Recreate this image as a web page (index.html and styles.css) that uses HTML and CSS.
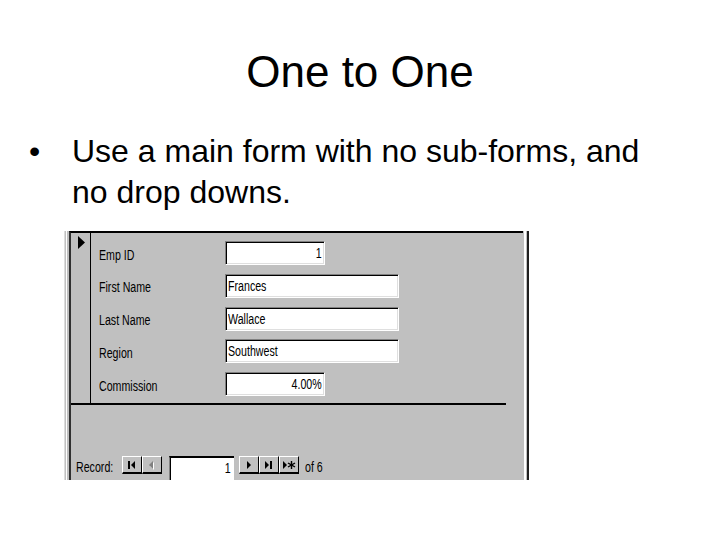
FILE: index.html
```html
<!DOCTYPE html>
<html>
<head>
<meta charset="utf-8">
<title>One to One</title>
<link rel="stylesheet" href="styles.css">
</head>
<body>
<div class="slide">
  <h1 class="title">One to One</h1>
  <div class="bullet">
    <span class="dot">•</span>
    <span class="btext">Use a main form with no sub-forms, and no drop downs.</span>
  </div>
  <div class="shot">
    <div class="edge-l"></div>
    <div class="form">
      <div class="detail">
        <div class="selector">
          <svg class="cur" width="8" height="14" viewBox="0 0 8 14"><polygon points="0,0 7,6.5 0,13" fill="#000"/></svg>
        </div>
        <div class="fields">
          <div class="lbl"><span class="t">Emp ID</span></div><div class="box short num"><span class="t r">1</span></div>
          <div class="lbl"><span class="t">First Name</span></div><div class="box long"><span class="t">Frances</span></div>
          <div class="lbl"><span class="t">Last Name</span></div><div class="box long"><span class="t">Wallace</span></div>
          <div class="lbl"><span class="t">Region</span></div><div class="box long"><span class="t">Southwest</span></div>
          <div class="lbl"><span class="t">Commission</span></div><div class="box short num"><span class="t r">4.00%</span></div>
        </div>
      </div>
      <div class="divider"></div>
      <div class="footer">
        <div class="nav">
          <span class="rec"><span class="t">Record:</span></span>
          <div class="btns">
            <span class="btn"><svg width="20" height="18" viewBox="0 0 20 18"><rect x="6" y="5" width="2" height="8" fill="#000"/><polygon points="13,5 9,9 13,13" fill="#000"/></svg></span>
            <span class="btn"><svg width="20" height="18" viewBox="0 0 20 18"><polygon points="11,5 7,9 11,13" fill="#fff" transform="translate(1,1)"/><polygon points="11,5 7,9 11,13" fill="#808080"/></svg></span>
          </div>
          <div class="navbox"><span class="t r">1</span></div>
          <div class="btns">
            <span class="btn"><svg width="20" height="18" viewBox="0 0 20 18"><polygon points="8,5 12,9 8,13" fill="#000"/></svg></span>
            <span class="btn"><svg width="20" height="18" viewBox="0 0 20 18"><polygon points="6,5 10,9 6,13" fill="#000"/><rect x="11" y="5" width="2" height="8" fill="#000"/></svg></span>
            <span class="btn"><svg width="20" height="18" viewBox="0 0 20 18"><polygon points="4,5 8,9 4,13" fill="#000"/><g stroke="#000" stroke-width="1.4"><line x1="12.5" y1="5" x2="12.5" y2="13"/><line x1="9" y1="7" x2="16" y2="11"/><line x1="9" y1="11" x2="16" y2="7"/></g></svg></span>
          </div>
          <span class="of"><span class="t">of 6</span></span>
        </div>
      </div>
    </div>
    <div class="edge-r"></div>
  </div>
</div>
</body>
</html>
```

FILE: styles.css
```css
html, body {
  margin: 0;
  padding: 0;
  background: #fff;
}
.slide {
  width: 720px;
  height: 540px;
  overflow: hidden;
  font-family: "Liberation Sans", Arial, sans-serif;
  color: #000;
}
.title {
  margin: 0;
  padding-top: 46px;
  font-size: 44px;
  line-height: 51px;
  font-weight: normal;
  text-align: center;
}
.bullet {
  display: flex;
  margin-top: 34px;
  padding-left: 29px;
  font-size: 32px;
  line-height: 41px;
}
.dot {
  width: 43px;
  flex: none;
}
.btext {
  width: 590px;
}
.shot {
  display: flex;
  margin-top: 18px;
  margin-left: 64px;
  width: 465px;
  height: 249px;
  background: #c0c0c0;
  overflow: hidden;
  font-family: "Liberation Sans", Arial, sans-serif;
  font-size: 14px;
}
.t {
  display: inline-block;
  transform: scaleX(0.76);
  transform-origin: left center;
  white-space: nowrap;
}
.t.r {
  transform-origin: right center;
}
.edge-l {
  width: 5px;
  flex: none;
  background: linear-gradient(to right, #dcdcdc 0 1px, #c0c0c0 1px 2px, #ffffff 2px 3px, #c0c0c0 3px);
}
.edge-r {
  width: 6px;
  flex: none;
  background: linear-gradient(to right, #c0c0c0 0 1px, #ffffff 1px 3px, #c0c0c0 3px 4px, #202020 4px 6px);
}
.form {
  flex: 1;
  display: flex;
  flex-direction: column;
  border-top: 2px solid #000;
  border-left: 2px solid #303030;
}
.detail {
  display: flex;
  height: 171px;
}
.selector {
  width: 19px;
  border-right: 1px solid #000;
  flex: none;
}
.cur {
  display: block;
  margin: 3px 0 0 7px;
}
.fields {
  display: grid;
  grid-template-columns: 126px auto;
  grid-auto-rows: 24px;
  row-gap: 8.75px;
  padding: 8px 0 0 8px;
  align-content: start;
}
.lbl {
  align-self: center;
  padding-top: 3px;
  line-height: 16px;
}
.box {
  box-sizing: border-box;
  background: #fff;
  border-top: 1px solid #808080;
  border-left: 1px solid #808080;
  border-right: 1px solid #fff;
  border-bottom: 1px solid #fff;
  box-shadow: inset 1px 1px 0 #000, inset -1px -1px 0 #dfdfdf;
  height: 24px;
  line-height: 22px;
  padding: 0 2px;
  justify-self: start;
  white-space: nowrap;
}
.short { width: 100px; }
.long { width: 174px; }
.num { text-align: right; }
.divider {
  height: 2px;
  width: 435px;
  background: #000;
}
.footer {
  flex: 1;
}
.nav {
  display: flex;
  align-items: flex-start;
  margin-top: 51px;
  padding-left: 5px;
  height: 24px;
}
.rec {
  width: 46px;
  line-height: 22px;
}
.btns {
  display: flex;
}
.btn {
  box-sizing: border-box;
  width: 20px;
  height: 18px;
  background: #c0c0c0;
  border-top: 1px solid #fff;
  border-left: 1px solid #fff;
  border-right: 1px solid #000;
  border-bottom: 2px solid #000;
  position: relative;
  overflow: hidden;
}
.btn svg {
  position: absolute;
  left: -1px;
  top: -1px;
}
.navbox {
  box-sizing: border-box;
  width: 65px;
  height: 26px;
  margin: 0 5px 0 7px;
  background: #fff;
  border-top: 2px solid #000;
  border-left: 1px solid #808080;
  box-shadow: inset 1px 0 0 #000;
  text-align: right;
  padding-right: 3px;
  line-height: 20px;
}
.of {
  margin-left: 6px;
  line-height: 22px;
}
```
